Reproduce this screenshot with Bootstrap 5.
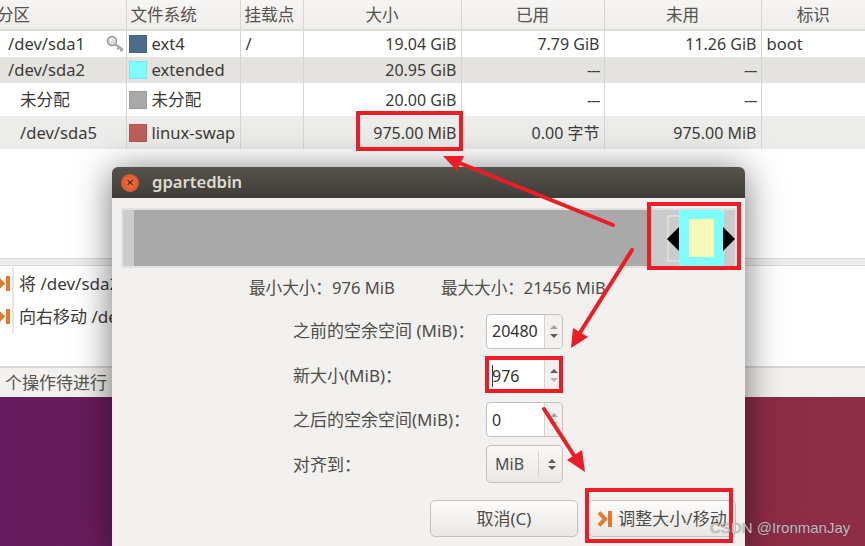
<!DOCTYPE html>
<html lang="zh">
<head>
  <meta charset="UTF-8">
  <title>GParted</title>
  <link href="https://cdn.jsdelivr.net/npm/bootstrap@5.3.0/dist/css/bootstrap.min.css" rel="stylesheet">
  <style>
    html, body { height: 100%; }
    body { margin: 0; overflow: hidden; background: #fff; font-family: "Noto Sans", "Noto Sans CJK SC", sans-serif; font-size: 16.6px; color: #3c3b37; }
    .screen { width: 865px; height: 546px; overflow: hidden; }
    .parts-area { height: 258px; }
    .parts { table-layout: fixed; width: 865px; margin: 0; color: #3c3b37; }
    .parts > * > tr > * { padding: 0 5px; border: 0; border-right: 1px solid #d6d5d2; background: transparent; box-shadow: none; color: inherit; font-weight: 400; vertical-align: middle; white-space: nowrap; line-height: 20px; }
    .parts > * > tr > *:last-child { border-right: 0; }
    .parts > thead > tr > th { height: 30px; background: linear-gradient(#f6f5f3, #efeeec); border-bottom: 2px solid #dcdbd8; text-align: center; color: #55534e; }
    .parts > thead > tr > th:first-child { text-align: left; padding-left: 0; }
    .parts > thead > tr > th.head-left { text-align: left; padding-left: 4px; }
    .clip-left { margin-left: -3px; }
    .h-a { height: 27px; } .h-b { height: 26px; } .h-c { height: 33px; } .h-d { height: 33px; }
    .parts > tbody > .row-grey > td { background: #e4e3e0; }
    .parts > tbody > .row-light > td { background: #ececeb; }
    .c1 { width: 126px; } .c2 { width: 114px; } .c3 { width: 63px; } .c4 { width: 158px; } .c5 { width: 143px; } .c6 { width: 157px; } .c7 { width: 104px; }
    .swatch { width: 18px; height: 18px; flex: none; border: 1px solid rgba(0,0,0,.08); margin-right: 5px; }
    .sw-ext4 { background: #4a6d8c; } .sw-ext { background: #7effff; } .sw-un { background: #a9a9a9; } .sw-swap { background: #bc6057; }
    .parts > tbody > tr > td.ind-1 { padding-left: 8px; padding-right: 0; }
    .parts > tbody > tr > td.ind-2 { padding-left: 20px; }
    .parts > tbody > tr > td.fs-cell { padding-left: 2px; padding-right: 0; }
    .parts > tbody > tr > td.num-cell { font-size: 16px; padding-right: 4px; }
    .dash { letter-spacing: -1px; }
    .band { height: 8px; background: #eeedeb; border-top: 1px solid #d9d8d5; border-bottom: 1px solid #d9d8d5; }
    .ops { height: 100px; background: #fff; padding-top: 1px; font-size: 17px; }
    .op-icons { width: 14px; height: 66px; border-right: 2px solid #e6e5e3; overflow: hidden; }
    .op-line { height: 33px; padding-left: 5px; white-space: nowrap; }
    .op-arrow { height: 33px; margin-left: -8px; flex: none; }
    .status-bar { height: 31px; background: #f2f1ef; border-top: 2px solid #d9d8d5; padding-left: 5px; color: #55534e; font-size: 17px; }
    .desktop { background: linear-gradient(90deg, #651b5e 0%, #6f1e5a 35%, #8a2b47 75%, #8f2d46 100%); }
    .dlg { position: absolute; left: 112px; top: 167px; width: 633px; height: 379px; background: #f2f1ef; border-radius: 6px 6px 0 0; box-shadow: 0 4px 36px rgba(0,0,0,.55); }
    .dlg-title { height: 31px; background: linear-gradient(#56534b, #3f3d38); border-radius: 6px 6px 0 0; color: #dfdbd2; font-weight: 600; padding-left: 9px; gap: 13px; }
    .dlg-close { width: 18px; height: 18px; border-radius: 50%; background: radial-gradient(#f0754a, #d9491c); color: #4a2a1c; font-size: 13px; line-height: 17px; text-align: center; }
    .graph { height: 60px; margin: 10px 8px 0 9px; border: 2px solid #e3e2e0; background: #cbcbcb; }
    .gr-free { width: 11px; } .gr-used { width: 513px; background: #a9a9a9; }
    .gr-gap { width: 32px; position: relative; }
    .gr-old { position: absolute; right: 0; top: 5px; bottom: 4px; width: 12px; border: 2px solid #dcdcdc; border-right: 0; }
    .gr-part { width: 45px; background: #7effff; }
    .gr-inner { width: 25px; height: 38px; background: #f8f8b8; }
    .gr-handle { position: absolute; top: 17px; width: 0; height: 0; border-top: 12px solid transparent; border-bottom: 12px solid transparent; }
    .gr-h-l { left: 544px; border-right: 12px solid #000; }
    .gr-h-r { left: 600px; border-left: 12px solid #000; }
    .limits { padding: 8px 0 0 137px; height: 37px; gap: 46px; color: #4f4d49; line-height: 24px; }
    .form-rows { padding-left: 181px; width: 452px; margin-top: 4px; }
    .f-row { height: 44.4px; }
    .f-label { width: 193px; white-space: nowrap; color: #4f4d49; font-size: 17px; }
    .spin { width: 77px; height: 35px; background: #fff; border: 1px solid #c4c2bd; border-radius: 4px; padding-left: 5px; color: #33322e; overflow: hidden; font-size: 16px; }
    .spin-val { flex: 1 1 auto; }
    .spin-btns { width: 18px; height: 100%; background: #f2f1ef; border-left: 1px solid #d5d3cf; gap: 5px; }
    .tri-up, .tri-dn { width: 0; height: 0; border-left: 4px solid transparent; border-right: 4px solid transparent; }
    .tri-up { border-bottom: 4px solid #a5a3a0; } .tri-dn { border-top: 4px solid #5f5d59; }
    .tri-up.is-on { border-bottom-color: #5f5d59; } .tri-dn.is-off { border-top-color: #b5b3af; }
    .caret-bar { display: block; width: 1px; height: 22px; background: #333; margin-right: -1px; flex: none; }
    .combo { width: 77px; height: 38px; border: 1px solid #c4c2bd; border-radius: 5px; background: linear-gradient(#faf9f8, #e9e8e5); padding-left: 8px; color: #4f4d49; font-size: 16px; }
    .combo-sep { width: 1px; height: 26px; background: #d5d3cf; margin-right: 9px; }
    .combo-btns { gap: 3px; margin-right: 6px; }
    .combo-btns .tri-up { border-bottom-color: #5f5d59; }
    .dlg-actions { position: absolute; top: 333px; left: 318px; gap: 10px; }
    .act-btn { width: 148px; height: 37px; padding: 0; font-size: 17px; color: #4f4d49; border: 1px solid #c4c2bd; border-radius: 5px; background: linear-gradient(#fdfcfb, #e8e7e4); white-space: nowrap; }
    .act-btn:hover { color: #4f4d49; }
    .act-icon { margin-right: 5px; flex: none; }
    .notes { position: absolute; left: 0; top: 0; pointer-events: none; }
    .mark-box { position: absolute; border: 4px solid #ee1c25; }
    .m1 { left: 356px; top: 111px; width: 107px; height: 40px; }
    .m2 { left: 647px; top: 202px; width: 94px; height: 68px; }
    .m3 { left: 485px; top: 356px; width: 78px; height: 37px; }
    .m4 { left: 585px; top: 488px; width: 148px; height: 55px; }
    .wm { position: absolute; left: 710px; top: 517px; font-family: "Liberation Sans", sans-serif; font-size: 15px; color: rgba(215,215,215,.85); text-shadow: 0 0 1px rgba(50,50,50,.7); white-space: nowrap; }
  </style>
</head>
<body>
  <div class="screen position-relative d-flex flex-column">
    <div class="parts-area">
      <table class="table parts">
        <colgroup>
          <col class="c1"><col class="c2"><col class="c3"><col class="c4"><col class="c5"><col class="c6"><col class="c7">
        </colgroup>
        <thead>
          <tr><th><span class="clip-left d-inline-block">分区</span></th><th class="head-left">文件系统</th><th class="head-left">挂载点</th><th>大小</th><th>已用</th><th>未用</th><th>标识</th></tr>
        </thead>
        <tbody>
          <tr class="h-a">
            <td class="ind-1"><div class="d-flex align-items-center justify-content-between">/dev/sda1
              <svg width="20" height="18" viewBox="0 0 20 18"><circle cx="6" cy="6" r="4.5" fill="#ddd" stroke="#999" stroke-width="1.5"/><circle cx="5" cy="5" r="1.3" fill="#fff"/><path d="M9 9l8 6M13 12l-1.500 2.500M16 14l-1.500 2.500" stroke="#a5a5a5" stroke-width="2.200" fill="none"/></svg></div></td>
            <td class="fs-cell"><div class="d-flex align-items-center"><span class="swatch sw-ext4"></span>ext4</div></td>
            <td>/</td><td class="text-end num-cell">19.04 GiB</td><td class="text-end num-cell">7.79 GiB</td><td class="text-end num-cell">11.26 GiB</td><td>boot</td>
          </tr>
          <tr class="h-b row-grey">
            <td class="ind-1">/dev/sda2</td>
            <td class="fs-cell"><div class="d-flex align-items-center"><span class="swatch sw-ext"></span>extended</div></td>
            <td></td><td class="text-end num-cell">20.95 GiB</td><td class="text-end num-cell dash">---</td><td class="text-end num-cell dash">---</td><td></td>
          </tr>
          <tr class="h-c">
            <td class="ind-2">未分配</td>
            <td class="fs-cell"><div class="d-flex align-items-center"><span class="swatch sw-un"></span>未分配</div></td>
            <td></td><td class="text-end num-cell">20.00 GiB</td><td class="text-end num-cell dash">---</td><td class="text-end num-cell dash">---</td><td></td>
          </tr>
          <tr class="h-d row-light">
            <td class="ind-2">/dev/sda5</td>
            <td class="fs-cell"><div class="d-flex align-items-center"><span class="swatch sw-swap"></span>linux-swap</div></td>
            <td></td><td class="text-end num-cell">975.00 MiB</td><td class="text-end num-cell">0.00 字节</td><td class="text-end num-cell">975.00 MiB</td><td></td>
          </tr>
        </tbody>
      </table>
    </div>
    <div class="band"></div>
    <div class="ops d-flex">
      <div class="op-icons d-flex flex-column">
        <svg class="op-arrow" width="22" viewBox="0 0 22 33"><path d="M4 10l6.500 6.500L4 23" stroke="#e2792f" stroke-width="4" fill="none"/><path d="M16 9v15" stroke="#e2792f" stroke-width="4"/></svg>
        <svg class="op-arrow" width="22" viewBox="0 0 22 33"><path d="M4 10l6.500 6.500L4 23" stroke="#e2792f" stroke-width="4" fill="none"/><path d="M16 9v15" stroke="#e2792f" stroke-width="4"/></svg>
      </div>
      <div>
        <div class="op-line d-flex align-items-center">将 /dev/sda2 向右扩展</div>
        <div class="op-line d-flex align-items-center">向右移动 /dev/sda5</div>
      </div>
    </div>
    <div class="status-bar d-flex align-items-center">个操作待进行</div>
    <div class="desktop flex-grow-1"></div>

    <div class="dlg">
      <div class="dlg-title d-flex align-items-center">
        <span class="dlg-close">×</span><span>gpartedbin</span>
      </div>
      <div class="graph d-flex position-relative">
        <div class="gr-free"></div>
        <div class="gr-used"></div>
        <div class="gr-gap"><div class="gr-old"></div></div>
        <div class="gr-part d-flex align-items-center justify-content-center"><div class="gr-inner"></div></div>
        <span class="gr-handle gr-h-l"></span>
        <span class="gr-handle gr-h-r"></span>
      </div>
      <div class="limits d-flex">
        <span>最小大小：976 MiB</span><span>最大大小：21456 MiB</span>
      </div>
      <div class="form-rows">
        <div class="f-row d-flex align-items-center">
          <span class="f-label">之前的空余空间 (MiB)：</span>
          <div class="spin d-flex align-items-center"><span class="spin-val">20480</span><span class="spin-btns d-flex flex-column align-items-center justify-content-center"><i class="tri-up"></i><i class="tri-dn"></i></span></div>
        </div>
        <div class="f-row d-flex align-items-center">
          <span class="f-label">新大小(MiB)：</span>
          <div class="spin d-flex align-items-center"><span class="caret-bar"></span><span class="spin-val">976</span><span class="spin-btns d-flex flex-column align-items-center justify-content-center"><i class="tri-up is-on"></i><i class="tri-dn is-off"></i></span></div>
        </div>
        <div class="f-row d-flex align-items-center">
          <span class="f-label">之后的空余空间(MiB)：</span>
          <div class="spin d-flex align-items-center"><span class="spin-val">0</span><span class="spin-btns d-flex flex-column align-items-center justify-content-center"><i class="tri-up"></i><i class="tri-dn is-off"></i></span></div>
        </div>
        <div class="f-row d-flex align-items-center">
          <span class="f-label">对齐到：</span>
          <div class="combo d-flex align-items-center"><span class="flex-grow-1">MiB</span><span class="combo-sep"></span><span class="combo-btns d-flex flex-column"><i class="tri-up"></i><i class="tri-dn"></i></span></div>
        </div>
      </div>
      <div class="dlg-actions d-flex">
        <button type="button" class="btn act-btn">取消(C)</button>
        <button type="button" class="btn act-btn d-flex align-items-center justify-content-center">
          <svg class="act-icon" width="16" height="18" viewBox="0 0 16 18"><path d="M2 2.500l6 6.500-6 6.500" stroke="#e2792f" stroke-width="4" fill="none"/><path d="M13 1v16" stroke="#e2792f" stroke-width="4"/></svg>调整大小/移动
        </button>
      </div>
    </div>

    <span class="mark-box m1"></span>
    <span class="mark-box m2"></span>
    <span class="mark-box m3"></span>
    <span class="mark-box m4"></span>
    <svg class="notes" width="865" height="546" viewBox="0 0 865 546">
      <g fill="#ee1c25">
        <path d="M613 225L462 164" stroke="#ee1c25" stroke-width="4" stroke-linecap="round"/>
        <path d="M443 156L464 156L457 171Z"/>
        <path d="M632 250L581 331" stroke="#ee1c25" stroke-width="4" stroke-linecap="round"/>
        <path d="M571 348L573 328L588 337Z"/>
        <path d="M544 409L575 457" stroke="#ee1c25" stroke-width="4" stroke-linecap="round"/>
        <path d="M585 472L567 460L582 450Z"/>
      </g>
    </svg>
    <span class="wm">CSDN @IronmanJay</span>
  </div>
</body>
</html>
